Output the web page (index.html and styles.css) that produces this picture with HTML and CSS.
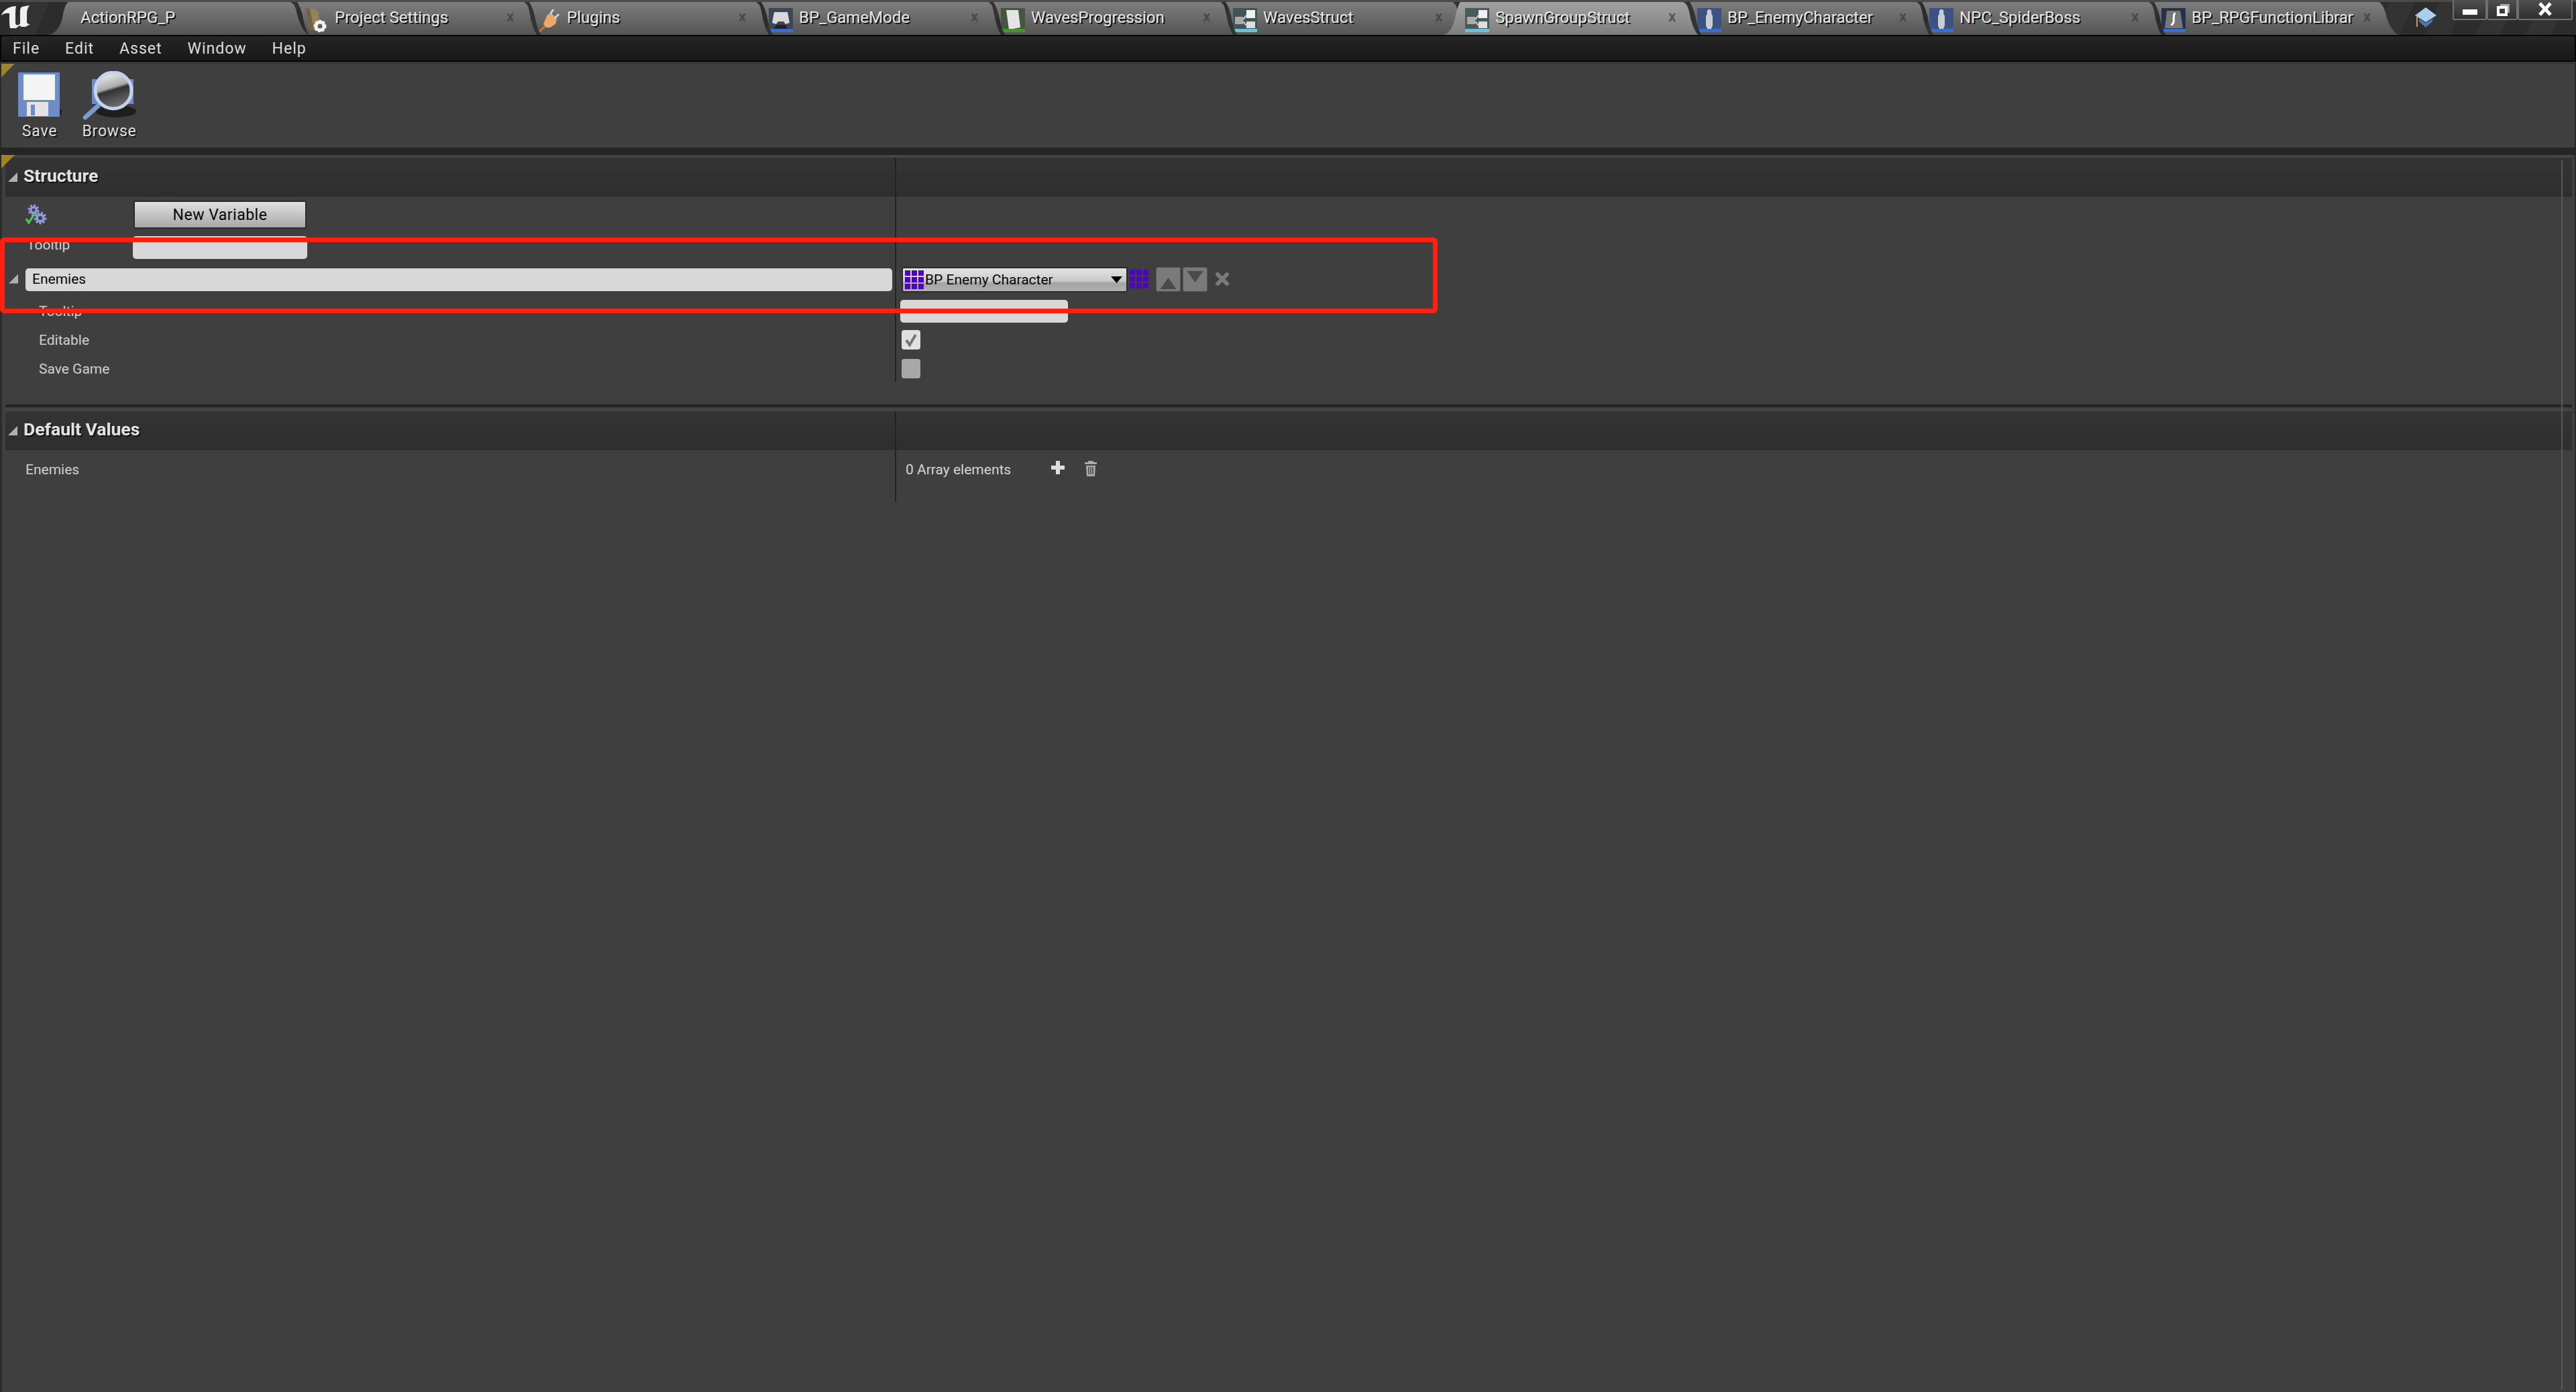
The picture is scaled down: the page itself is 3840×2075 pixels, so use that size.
FILE: index.html
```html
<!DOCTYPE html>
<html lang="en">
<head>
  <meta charset="UTF-8" />
  <title>SpawnGroupStruct</title>
  <link rel="stylesheet" href="styles.css">
</head>
<body>
  <div class="titlebar">
    <svg class="logo" viewBox="0 0 46 46"><path d="M2 23 C4 17 10 12 17 10 L24 9 C23 13 23 18 23 24 L23 34 C23 37 25 38 28 37 L30 35 L30 16 C30 13 31 11 33 10 L44 8 C41 12 40 16 40 22 L40 33 C41 36 43 36 45 36 L38 40 L32 40 L29 38 L24 42 L15 42 C14 38 14 32 14 28 L14 20 C10 19 5 20 2 23 Z" fill="#f0f0f0"/></svg>
    <div class="tabs">
      <div class="tab tab-first"><span class="tab-title">ActionRPG_P</span></div>
      <div class="tab">
        <svg class="tab-icon" viewBox="0 0 36 36"><path d="M2 1h14l3 4h2l1 18-8 10H8z" fill="#94835a"/><path d="M2 1h6l6 32H8z" fill="#6f6346"/><circle cx="23" cy="27" r="6" fill="none" stroke="#f2f2f2" stroke-width="5"/><circle cx="23" cy="27" r="8" fill="none" stroke="#f2f2f2" stroke-width="3" stroke-dasharray="3 3"/></svg>
        <span class="tab-title">Project Settings</span><span class="tab-close">x</span>
      </div>
      <div class="tab">
        <svg class="tab-icon" viewBox="0 0 36 36"><path d="M16 10l6-2 8 8-2 8-8 5h-6l-4-5z" fill="#eea868"/><path d="M13 27l-9 8" stroke="#c4762f" stroke-width="3"/><path d="M20 9l5-7M27 15l6-6" stroke="#c8d4e8" stroke-width="3"/></svg>
        <span class="tab-title">Plugins</span><span class="tab-close">x</span>
      </div>
      <div class="tab">
        <svg class="tab-icon" viewBox="0 0 36 36"><rect width="36" height="36" fill="#3d4657"/><path d="M8 6h20l3 16-6 2-3-4h-8l-3 4-6-2z" fill="#d8d8d8"/><path d="M11 25h14l3 6H8z" fill="#222"/><rect y="31" width="36" height="5" fill="#2f6fe0"/></svg>
        <span class="tab-title">BP_GameMode</span><span class="tab-close">x</span>
      </div>
      <div class="tab">
        <svg class="tab-icon" viewBox="0 0 36 36"><rect width="36" height="36" fill="#45553f"/><path d="M8 3h18l3 26-17 3z" fill="#e4e4e4"/><rect y="31" width="36" height="5" fill="#3f9a24"/></svg>
        <span class="tab-title">WavesProgression</span><span class="tab-close">x</span>
      </div>
      <div class="tab">
        <svg class="tab-icon" viewBox="0 0 36 36"><rect width="36" height="36" fill="#3f5557"/><rect x="20" y="3" width="13" height="12" fill="#f0f0f0"/><rect x="3" y="13" width="12" height="11" fill="#aaa"/><rect x="20" y="20" width="13" height="10" fill="#ddd"/><path d="M15 17l5-6M15 20l5 6" stroke="#ccc" stroke-width="2"/><rect y="31" width="36" height="5" fill="#5cc8d8"/></svg>
        <span class="tab-title">WavesStruct</span><span class="tab-close">x</span>
      </div>
      <div class="tab tab-active">
        <svg class="tab-icon" viewBox="0 0 36 36"><rect width="36" height="36" fill="#4a5a5c"/><rect x="20" y="3" width="13" height="12" fill="#f0f0f0"/><rect x="3" y="13" width="12" height="11" fill="#aaa"/><rect x="20" y="20" width="13" height="10" fill="#ddd"/><path d="M15 17l5-6M15 20l5 6" stroke="#ccc" stroke-width="2"/><rect y="31" width="36" height="5" fill="#5cc8d8"/></svg>
        <span class="tab-title">SpawnGroupStruct</span><span class="tab-close">x</span>
      </div>
      <div class="tab">
        <svg class="tab-icon" viewBox="0 0 36 36"><rect width="36" height="36" fill="#3c5280"/><path d="M18 2c3 0 4 3 3 6l2 4v14l-2 5h-6l-2-5V12l2-4c-1-3 0-6 3-6z" fill="#c8ccd4"/><rect y="31" width="36" height="5" fill="#2f6fe0"/></svg>
        <span class="tab-title">BP_EnemyCharacter</span><span class="tab-close">x</span>
      </div>
      <div class="tab">
        <svg class="tab-icon" viewBox="0 0 36 36"><rect width="36" height="36" fill="#3c5280"/><path d="M18 2c3 0 4 3 3 6l2 4v14l-2 5h-6l-2-5V12l2-4c-1-3 0-6 3-6z" fill="#c8ccd4"/><rect y="31" width="36" height="5" fill="#2f6fe0"/></svg>
        <span class="tab-title">NPC_SpiderBoss</span><span class="tab-close">x</span>
      </div>
      <div class="tab tab-last">
        <svg class="tab-icon" viewBox="0 0 36 36"><rect width="36" height="36" fill="#27324a"/><path d="M8 4h20l4 26H5z" fill="#777"/><path d="M21 8c-4 0-2 8-3 13-1 3-2 4-4 4" stroke="#fff" stroke-width="3" fill="none"/><rect y="31" width="36" height="5" fill="#2f6fe0"/></svg>
        <span class="tab-title">BP_RPGFunctionLibrar</span><span class="tab-close">x</span>
      </div>
    </div>
    <svg class="cap" viewBox="0 0 32 30"><path d="M16 0l16 12-16 10L0 12z" fill="#a8d0ec"/><path d="M6 17l10 6 10-6v4L16 30 6 21z" fill="#4c78a8"/><path d="M3 12v17" stroke="#c99a52" stroke-width="2"/></svg>
    <div class="window-btns">
      <div class="win-btn win-min"><span class="min-mark"></span></div>
      <div class="win-btn win-restore"><span class="restore-mark"></span></div>
      <div class="win-btn win-close">
        <svg viewBox="0 0 22 21" width="22" height="21"><path d="M3 2l16 17M19 2L3 19" stroke="#fff" stroke-width="5"/></svg>
      </div>
    </div>
  </div>

  <div class="menubar">
    <span>File</span><span>Edit</span><span>Asset</span><span>Window</span><span>Help</span>
  </div>

  <div class="toolbar">
    <i class="corner"></i>
    <div class="tool tool-save">
      <svg class="tool-icon" viewBox="0 0 68 70"><path d="M2 2h62v66H2z" fill="#6d8cc8"/><path d="M64 68l4-8-4-4z" fill="#222"/><rect x="10" y="5" width="47" height="38" fill="#f4f4f4"/><rect x="15" y="46" width="32" height="21" fill="#e4e4e4"/><rect x="21" y="50" width="6" height="16" fill="#6d8cc8"/></svg>
      <span>Save</span>
    </div>
    <div class="tool tool-browse">
      <svg class="tool-icon" viewBox="0 0 84 76"><defs><linearGradient id="lens" x1="0" y1="0" x2="0.3" y2="1"><stop offset="0" stop-color="#fff"/><stop offset="0.5" stop-color="#aaa"/><stop offset="0.58" stop-color="#333"/><stop offset="1" stop-color="#6a6a6a"/></linearGradient></defs><ellipse cx="52" cy="60" rx="30" ry="9" fill="#1e1e1e"/><rect x="16" y="12" width="62" height="37" fill="#6d8cc8"/><circle cx="48" cy="29" r="27" fill="url(#lens)" stroke="#c4d2ee" stroke-width="5"/><path d="M25 52L6 69" stroke="#7c9ad0" stroke-width="7" stroke-linecap="round"/></svg>
      <span>Browse</span>
    </div>
  </div>

  <div class="gap-bar"><i class="corner"></i></div>

  <main class="content">
    <section class="group group-structure">
      <div class="group-head">
        <i class="tri"></i><h2>Structure</h2>
      </div>
      <div class="rows">
        <div class="row row-tools">
          <svg class="gears" viewBox="0 0 32 30"><circle cx="12" cy="8" r="6" fill="#8f9bd8"/><circle cx="12" cy="8" r="7" fill="none" stroke="#8f9bd8" stroke-width="3" stroke-dasharray="3 2.5"/><circle cx="12" cy="8" r="2.5" fill="#444"/><circle cx="22" cy="20" r="7" fill="#8f9bd8"/><circle cx="22" cy="20" r="8" fill="none" stroke="#8f9bd8" stroke-width="3" stroke-dasharray="3 2.5"/><circle cx="22" cy="20" r="3" fill="#444"/><path d="M1 21l4 6 8-13" fill="none" stroke="#58c858" stroke-width="3"/></svg>
          <button class="btn-new">New Variable</button>
        </div>
        <div class="row row-tip">
          <span class="label">Tooltip</span>
          <div class="input input-tip"></div>
        </div>
        <div class="row row-var">
          <i class="tri tri-var"></i>
          <div class="input input-name">Enemies</div>
          <div class="var-controls">
            <div class="dropdown">
              <div class="grid grid-in"><i></i><i></i><i></i><i></i><i></i><i></i><i></i><i></i><i></i></div>
              <span class="dropdown-text">BP Enemy Character</span>
              <i class="dropdown-arrow"></i>
            </div>
            <div class="grid grid-out"><i></i><i></i><i></i><i></i><i></i><i></i><i></i><i></i><i></i></div>
            <div class="move-btn move-up"><i></i></div>
            <div class="move-btn move-down"><i></i></div>
            <svg class="remove" viewBox="0 0 20 20"><path d="M3 3l14 14M17 3L3 17" stroke="#7a7a7a" stroke-width="6" stroke-linecap="round"/></svg>
          </div>
        </div>
        <div class="row row-sub">
          <span class="label label-sub">Tooltip</span>
          <div class="input input-subtip"></div>
        </div>
        <div class="row row-sub row-editable">
          <span class="label label-sub">Editable</span>
          <div class="check check-on"><svg viewBox="0 0 28 29"><path d="M7 15l5 7 9-15" fill="none" stroke="#777" stroke-width="4"/></svg></div>
        </div>
        <div class="row row-sub row-save">
          <span class="label label-sub">Save Game</span>
          <div class="check check-off"></div>
        </div>
        <div class="divider divider-structure"></div>
      </div>
    </section>

    <div class="section-line"></div>

    <section class="group group-defaults">
      <div class="group-head">
        <i class="tri"></i><h2>Default Values</h2>
      </div>
      <div class="rows">
        <div class="row row-default">
          <span class="label label-default">Enemies</span>
          <span class="array-count">0 Array elements</span>
          <svg class="add" viewBox="0 0 22 22"><path d="M11 1v20M1 11h20" stroke="#ddd" stroke-width="6"/></svg>
          <svg class="trash" viewBox="0 0 20 24"><path d="M1 3h18v3H1zM6 1h8v2H6z" fill="#aaa"/><path d="M3 8h14l-1 16H4z" fill="#aaa"/><path d="M7 10v11M10 10v11M13 10v11" stroke="#444" stroke-width="1.5"/></svg>
        </div>
        <div class="divider divider-defaults"></div>
      </div>
    </section>
  </main>

  <div class="splitter"></div>
  <div class="highlight"></div>
</body>
</html>
```

FILE: styles.css
```css
* {
  box-sizing: border-box;
}

html, body {
  height: 100%;
}

body {
  margin: 0;
  display: flex;
  flex-direction: column;
  overflow: hidden;
  background: #3f3f3f;
  font-family: Roboto, 'Liberation Sans', sans-serif;
  font-size: 21px;
  color: #d4d4d4;
}

/* title bar and tabs */
.titlebar {
  height: 54px;
  flex: none;
  display: flex;
  position: relative;
  border-bottom: 2px solid #060606;
  background: repeating-linear-gradient(115deg, #2c2c2c 0 34px, #333 34px 68px);
  box-shadow: inset 0 3px 0 #4a4a4a;
}

.logo {
  width: 46px;
  height: 46px;
  flex: none;
}

.tabs {
  display: flex;
  margin: 3px 0 0 27px;
  height: 49px;
}

.tab {
  width: 357px;
  height: 49px;
  margin-right: -11px;
  flex: none;
  display: flex;
  align-items: center;
  padding-left: 11px;
  position: relative;
  background: linear-gradient(#7e7e7e, #545454);
  clip-path: path('M3 0 L338 0 Q344 2 346 14 Q350 38 357 49 L17 49 Q11 38 8 20 Q5 8 0 0 Z');
}

.tab-first {
  width: 386px;
  margin-right: -16px;
  padding-left: 47px;
  clip-path: path('M29 0 L360 0 Q366 2 369 14 Q374 38 386 49 L0 49 Q14 46 20 24 Q23 4 29 0 Z');
}

.tab-active {
  width: 379px;
  margin-left: -21px;
  margin-right: -12px;
  padding-left: 32px;
  z-index: 1;
  background: linear-gradient(#a2a2a2, #7e7e7e);
  clip-path: path('M25 0 L357 0 Q363 2 366 14 Q370 38 379 49 L0 49 Q12 46 17 24 Q21 4 25 0 Z');
}

.tab-last {
  width: 364px;
  margin-right: 0;
  clip-path: path('M3 0 L335 0 Q341 2 345 16 Q350 40 364 49 L17 49 Q11 38 8 20 Q5 8 0 0 Z');
}

.tab-icon {
  width: 36px;
  height: 36px;
  margin-top: 5px;
  flex: none;
}

.tab-title {
  margin-left: 9px;
  margin-top: -4px;
  font-size: 24px;
  white-space: nowrap;
  color: #e6e6e6;
  text-shadow: 2px 2px 0 #111;
}

.tab-first .tab-title {
  margin-left: 0;
}

.tab-close {
  position: absolute;
  left: 312px;
  top: 9px;
  font-size: 22px;
  font-weight: 700;
  color: #3f3f3f;
  opacity: 0.7;
}

.tab-active .tab-close {
  left: 335px;
}

.cap {
  position: absolute;
  left: 3600px;
  top: 11px;
  width: 32px;
  height: 30px;
}

.window-btns {
  position: absolute;
  left: 3656px;
  top: 0;
  display: flex;
}

.win-btn {
  height: 30px;
  display: flex;
  align-items: center;
  justify-content: center;
  background: linear-gradient(#4e4e4e, #303030);
  border: 2px solid #707070;
  border-top: 0;
  border-radius: 0 0 3px 3px;
}

.win-min {
  width: 51px;
}

.win-restore {
  width: 46px;
}

.win-close {
  width: 82px;
}

.win-close svg {
  margin-top: -1px;
}

.min-mark {
  width: 22px;
  height: 8px;
  margin-top: 8px;
  background: #fff;
}

.restore-mark {
  width: 16px;
  height: 15px;
  margin-top: 5px;
  border: 4px solid #fff;
  box-shadow: 4px -4px 0 -1px #aaa;
}

/* menu */
.menubar {
  height: 38px;
  flex: none;
  display: flex;
  align-items: center;
  gap: 38px;
  padding-left: 17px;
  border: 2px solid #060606;
  border-top: 0;
  background: linear-gradient(#252525, #181818);
  font-size: 23px;
  letter-spacing: 1px;
  color: #dcdcdc;
}

/* toolbar */
.toolbar {
  height: 128px;
  flex: none;
  position: relative;
  border-top: 3px solid #333;
  border-left: 2px solid #2b2b2b;
  border-right: 2px solid #2b2b2b;
  background: #3f3f3f;
}

.corner {
  position: absolute;
  left: 0;
  top: 0;
  width: 20px;
  height: 20px;
  background: #a08428;
  clip-path: polygon(0 0, 100% 0, 0 100%);
}

.tool {
  position: absolute;
  top: 11px;
  display: flex;
  flex-direction: column;
  align-items: center;
  font-size: 23px;
  letter-spacing: 0.8px;
  text-shadow: 2px 2px 0 #111;
  color: #dedede;
}

.tool span {
  position: absolute;
  top: 76px;
}

.tool-save {
  left: 23px;
  width: 68px;
}

.tool-browse {
  left: 119px;
  width: 84px;
}

.tool-icon {
  display: block;
}

.tool-save .tool-icon {
  width: 68px;
  height: 70px;
}

.tool-browse .tool-icon {
  width: 84px;
  height: 76px;
}

.gap-bar {
  height: 11px;
  flex: none;
  position: relative;
  background: #252525;
}

.gap-bar .corner {
  left: 2px;
  top: 11px;
  z-index: 1;
}

/* details panel */
.content {
  flex: 1;
  padding: 0 4px 0 5px;
  border-left: 3px solid #2b2b2b;
  border-right: 2px solid #2b2b2b;
}

.group-head {
  height: 62px;
  display: flex;
  align-items: center;
  position: relative;
  border-top: 4px solid #454545;
  border-radius: 4px 4px 0 0;
  background: linear-gradient(#343434, #2e2e2e);
}

.group-head h2 {
  margin: -5px 0 0 9px;
  font-size: 26.5px;
  font-weight: 700;
  color: #e4e4e4;
  text-shadow: 2px 2px 0 #111;
}

.group-head::after {
  content: '';
  position: absolute;
  left: 1326px;
  top: 0;
  bottom: 0;
  width: 2px;
  background: #222;
}

.tri {
  width: 14px;
  height: 14px;
  margin-left: 4px;
  flex: none;
  background: #b0b0b0;
  clip-path: polygon(100% 0, 100% 100%, 0 100%);
}

.rows {
  position: relative;
}

.divider {
  position: absolute;
  left: 1326px;
  top: 0;
  bottom: 0;
  width: 2px;
  background: #242424;
}

.divider-structure {
  bottom: 2px;
}

.row {
  display: flex;
  align-items: center;
  position: relative;
}

.label {
  color: #cfcfcf;
}

.row-tools {
  height: 59px;
  padding-bottom: 5px;
}

.gears {
  width: 32px;
  height: 30px;
  margin-left: 30px;
  flex: none;
}

.btn-new {
  width: 258px;
  height: 42px;
  margin-left: 129px;
  padding: 0;
  border: 2px solid #2a2a2a;
  border-radius: 3px;
  background: linear-gradient(#e0e0e0, #a8a8a8);
  font-family: inherit;
  font-size: 23px;
  letter-spacing: 0.5px;
  color: #060606;
}

.input {
  background: #d8d8d8;
  border-radius: 5px;
  color: #060606;
}

.row-tip {
  height: 34px;
}

.row-tip .label {
  margin-left: 32px;
  margin-bottom: 8px;
}

.input-tip {
  position: absolute;
  left: 190px;
  width: 260px;
  height: 34px;
}

.row-var {
  height: 50px;
  margin-top: 6px;
}

.tri-var {
  margin-left: 5px;
  margin-top: -3px;
}

.input-name {
  width: 1292px;
  height: 34px;
  margin-left: 11px;
  padding-left: 10px;
  line-height: 33px;
}

.var-controls {
  position: absolute;
  left: 1336px;
  top: 6px;
  display: flex;
}

.dropdown {
  width: 337px;
  height: 38px;
  display: flex;
  align-items: center;
  padding-left: 3px;
  border: 2px solid #2a2a2a;
  border-radius: 3px;
  background: linear-gradient(#e4e4e4, #c8c8c8 55%, #a4a4a4 65%, #b0b0b0);
  color: #060606;
}

.dropdown-text {
  margin-left: 2px;
  font-size: 21px;
}

.dropdown-arrow {
  width: 17px;
  height: 10px;
  margin-left: auto;
  margin-right: 6px;
  background: #000;
  clip-path: polygon(0 0, 100% 0, 50% 100%);
}

.grid {
  display: grid;
  grid-template-columns: repeat(3, 8px);
  grid-template-rows: repeat(3, 8px);
  gap: 2px;
  flex: none;
}

.grid i {
  background: #5000c0;
}

.grid-out {
  margin: 4px 11px 0 3px;
}

.move-btn {
  width: 37px;
  height: 37px;
  margin-right: 3px;
  display: flex;
  justify-content: center;
  border: 1px solid #555;
  border-radius: 3px;
  background: #7a7a7a;
}

.move-btn i {
  width: 24px;
  height: 17px;
  background: #4a4a4a;
}

.move-up i {
  margin-top: 15px;
  clip-path: polygon(50% 0, 100% 100%, 0 100%);
}

.move-down i {
  margin-top: 5px;
  clip-path: polygon(0 0, 100% 0, 50% 100%);
}

.remove {
  width: 20px;
  height: 20px;
  margin: 8px 0 0 9px;
}

.row-sub {
  height: 43px;
}

.label-sub {
  margin-left: 50px;
}

.input-subtip {
  position: absolute;
  left: 1334px;
  width: 250px;
  height: 34px;
}

.check {
  position: absolute;
  left: 1336px;
  width: 28px;
  height: 29px;
  border-radius: 4px;
}

.check-on {
  background: #e0e0e0;
}

.check-on svg {
  display: block;
}

.check-off {
  background: #a8a8a8;
}

.section-line {
  height: 6px;
  margin-top: 32px;
  border-top: 4px solid #242424;
}

.row-default {
  height: 77px;
  padding-bottom: 19px;
}

.label-default {
  margin-left: 30px;
}

.array-count {
  position: absolute;
  left: 1342px;
  font-size: 21px;
}

.add {
  position: absolute;
  left: 1558px;
  top: 15px;
  width: 22px;
  height: 22px;
}

.trash {
  position: absolute;
  left: 1608px;
  top: 15px;
  width: 20px;
  height: 24px;
}

/* thin line that runs down the right side of the panel */
.splitter {
  position: absolute;
  left: 3818px;
  top: 239px;
  bottom: 3px;
  width: 2px;
  background: #575757;
}

/* red annotation drawn over the screenshot */
.highlight {
  position: absolute;
  left: 0;
  top: 354px;
  width: 2143px;
  height: 113px;
  border: 7px solid #ff2010;
  border-radius: 6px;
}
```
